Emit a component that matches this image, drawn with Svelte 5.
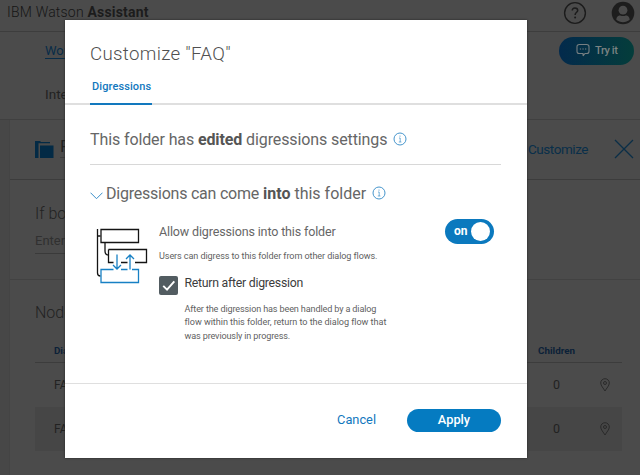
<script>
  let allow = $state(true);
  let returnAfter = $state(true);
  const nodes = [{ name: 'FAQ', children: 0 }, { name: 'FAQ', children: 0 }];
</script>

{#snippet info()}
  <svg class="info" width="14" height="14" viewBox="0 0 14 14" fill="none" stroke="#3c8fc9">
    <circle cx="7" cy="7" r="6" stroke-width=".95" />
    <path d="M6 6h1.200v4M5.800 10h2.600" stroke-width=".7" />
    <circle cx="7" cy="4" r=".6" fill="#3c8fc9" stroke="none" />
  </svg>
{/snippet}

<div class="screen">
  <header class="top">
    <span class="brand">IBM Watson <b>Assistant</b></span>
    <svg width="24" height="24" viewBox="0 0 24 24" fill="none" stroke="#1c1c1c" stroke-width="1.4">
      <circle cx="12" cy="12" r="10.4" />
      <path d="M9.3 9.6V9.2c0-1.2.8-2.1 2.6-2.1s2.8 1 2.8 2.3c0 1.9-2.6 1.8-2.6 4.5" stroke-width="1.5" />
      <circle cx="12.1" cy="16.6" r="1" fill="#1c1c1c" stroke="none" />
    </svg>
    <svg class="user" width="24" height="24" viewBox="0 0 24 24">
      <circle cx="12" cy="12" r="11.3" fill="#1d1d1d" />
      <circle cx="12" cy="9.2" r="4.4" fill="#4b4b4b" />
      <path d="M5.3 18.8c.2-3.6 2.3-4.4 4-4.3 1.8.7 3.6.7 5.4 0 1.7-.1 3.8.7 4 4.3-3.9 3.2-9.5 3.2-13.400 0z" fill="#4b4b4b" />
    </svg>
  </header>
  <section class="crumbs">
    <div class="crumb-row">
      <span class="link">Work</span>
      <span class="try">
        <svg width="14" height="14" viewBox="0 0 14 14" fill="none" stroke="#777f82">
          <path d="M7 12.500V10.500H3.300Q1 10.500 1 8.200V3.800Q1 1.500 3.300 1.500H10.700Q13 1.500 13 3.800V8.200Q13 10.500 10.700 10.500H9L7 13" stroke-width="1.100" />
          <path d="M3.800 6h1.300M6.400 6h1.300M9 6h1.300" stroke-width="1.200" />
        </svg>
        Try it
      </span>
    </div>
    <div class="tabs">Intents</div>
  </section>
  <main class="editor">
    <div class="node-head">
      <svg width="19" height="19" viewBox="0 0 19 19" fill="#032a45">
        <path d="M0 1h5l1 1h9v1.200H3.500V18H0z" /><path d="M5 5.500h13.500V18H5z" />
      </svg>
      <span class="node-name"><span>FAQ</span></span>
      <span class="customize">Customize</span>
      <svg width="20" height="20" viewBox="0 0 20 20" stroke="#0a2e47" stroke-width="1.300"><path d="M1 1l18 18M19 1L1 19" /></svg>
    </div>
    <div class="condition">
      <div class="if">If bot recognizes</div>
      <div class="enter">Enter condition</div>
    </div>
    <div class="nodes">
      <div class="nodes-title">Nodes</div>
      <div class="row th"><span>Dialog node</span><span class="kids">Children</span></div>
      {#each nodes as node}
        <div class="row"><span>{node.name}</span><span class="count">{node.children}</span>
          <svg width="10" height="14" viewBox="0 0 10 14" fill="none" stroke="#272727" stroke-width=".9">
            <path d="M5 13C3.500 10.300.7 7.700.7 5a4.300 4.300 0 0 1 8.600 0c0 2.700-2.800 5.300-4.300 8z" /><circle cx="5" cy="5" r="1.500" />
          </svg>
        </div>
      {/each}
    </div>
  </main>

  <div class="modal" role="dialog">
    <div class="title">Customize "FAQ"</div>
    <nav><span class="tab">Digressions</span></nav>
    <div class="body">
      <div class="summary"><span>This folder has <b>edited</b> digressions settings</span>{@render info()}</div>
      <div class="group">
        <svg class="chev" width="13" height="8" viewBox="0 0 13 8" fill="none" stroke="#3c8fc9"><path d="M.5.700l6 6 6-6" /></svg>
        <span><span class="lead">Digressions can come</span> <b>into</b> this folder</span>{@render info()}
      </div>
      <div class="setting">
        <svg class="diagram" width="52" height="56" viewBox="0 0 52 56" fill="none" stroke="#141414" stroke-width="1.300">
          <path d="M1.500 1V45q0 3 3 3M1.500 8h3M9 15v8q0 4 3.500 4" />
          <path d="M5 1.500H42.500V14.500H5z" />
          <path d="M12.500 21.500H50.500V34.500H39M31.500 34.500H25M17.500 34.500H12.500V21.500" />
          <g stroke="#1780c4">
            <path d="M31.500 41.500H25M17.500 41.500H5V54.500H42.500V41.500H36" />
            <path d="M21 26.500V41M17 37l4 4 4-4M34 41.500V27M30 31l4-4 4 4" />
          </g>
        </svg>
        <div class="options">
          <div class="allow"><span class="label">Allow digressions into this folder</span>
            <button class="toggle" aria-pressed={allow} onclick={() => (allow = !allow)}><span>{allow ? 'on' : 'off'}</span><i></i></button>
          </div>
          <div class="hint">Users can digress to this folder from other dialog flows.</div>
          <div class="check">
            <button class="box" aria-label="Return after digression" onclick={() => (returnAfter = !returnAfter)}>
              {#if returnAfter}<svg width="19" height="19" viewBox="0 0 18 18" fill="none" stroke="#fff" stroke-width="1.800"><path d="M4 9.300l3.600 3.600L14.500 5" /></svg>{/if}
            </button>
            <span>Return after digression</span>
          </div>
          <div class="desc">
            <div>After the digression has been handled by a dialog</div>
            <div class="wide">flow within this folder, return to the dialog flow that</div>
            <div>was previously in progress.</div>
          </div>
        </div>
      </div>
    </div>
    <footer><button class="cancel">Cancel</button><button class="apply">Apply</button></footer>
  </div>
</div>

<style>
  .screen, .screen * { box-sizing: border-box; }
  .screen { position: relative; width: 640px; height: 475px; overflow: hidden; background: #4b4b4b; color: #222; font-family: Roboto, "Liberation Sans", sans-serif; white-space: nowrap; }
  button { border: 0; margin: 0; padding: 0; font-family: inherit; background: none; }
  .top { height: 32px; display: flex; align-items: flex-start; padding: 1px 5px 0 7px; border-bottom: 1px solid #3d3d3d; }
  .brand { flex: 1; font-size: 14px; line-height: 23px; font-weight: 300; color: #161616; letter-spacing: .2px; }
  .brand b { font-weight: 700; color: #1c1c1c; }
  .user { margin-left: 24px; }
  .crumbs { height: 88px; padding: 5px 6px 0 45px; border-bottom: 1px solid #404040; }
  .crumb-row { display: flex; justify-content: space-between; height: 28px; align-items: center; }
  .link { color: #082c48; font-size: 13px; text-decoration: underline; text-underline-offset: 3px; padding-bottom: 2px; }
  .try { width: 75px; height: 28px; border-radius: 14px; background: linear-gradient(90deg, #032a4c, #043d3b); display: flex; align-items: center; gap: 5px; padding: 0 0 2px 17px; color: #7b8383; font-size: 11px; font-weight: 500; letter-spacing: -.4px; }
  .tabs { margin-top: 19px; font-size: 13.500px; line-height: 20px; }
  .editor { height: 355px; margin-left: 9px; border-left: 1px solid #444; box-shadow: -9px 0 #474747; }
  .node-head { height: 60px; display: flex; align-items: center; padding: 0 6px 1px 25px; border-bottom: 1px solid #3c3c3c; }
  .node-name { margin-left: 6px; flex: 1; font-size: 17px; line-height: 21px; padding-bottom: 4px; }
  .node-name span { display: inline-block; width: 150px; border-bottom: 1px solid #3c3c3c; }
  .customize { font-size: 13.500px; color: #092f4a; margin-right: 26px; letter-spacing: -.45px; }
  .condition { height: 100px; padding: 23px 0 0 25px; border-bottom: 1px solid #424242; }
  .if { font-size: 16px; line-height: 21px; font-weight: 300; }
  .enter { margin-top: 7px; width: 400px; height: 23px; line-height: 20px; font-size: 13px; color: #303030; border-bottom: 1px solid #3a3a3a; }
  .nodes { padding: 22px 18px 0 25px; }
  .nodes-title { font-size: 16px; line-height: 22px; font-weight: 300; height: 39px; }
  .row { height: 44px; display: flex; align-items: center; padding: 0 12px 0 19px; font-size: 12px; }
  .row:last-child { background: #464646; }
  .row span:first-child { flex: 1; }
  .th { height: 22px; padding: 0 47px 2px 19px; border-bottom: 1px solid #3c3c3c; color: #0b2138; font-size: 9.800px; font-weight: 700; }
  .count { margin-right: 40px; padding-bottom: 1px; font-size: 12.500px; }

  .modal { position: absolute; left: 65px; top: 20px; width: 462px; height: 438px; background: #fff; box-shadow: 0 0 2px #222; color: #5f5f5f; }
  .title { height: 50px; padding: 22px 0 0 25px; font-size: 18.700px; line-height: 24px; font-weight: 300; color: #505050; letter-spacing: .32px; }
  nav { height: 35px; padding-left: 25px; border-bottom: 2px solid #dfdfdf; }
  .tab { display: block; width: 62px; height: 35px; padding: 9px 0 0 2px; border-bottom: 2px solid #1278be; color: #1278be; font-size: 11px; line-height: 15px; font-weight: 500; letter-spacing: .1px; }
  .body { height: 278px; padding: 0 26px 0 25px; }
  .summary { height: 60px; padding-top: 9px; display: flex; align-items: center; gap: 6px; border-bottom: 1px solid #d8d8d8; font-size: 16px; letter-spacing: -.11px; color: #666; }
  .group { height: 50px; padding-top: 6px; display: flex; align-items: center; font-size: 16px; letter-spacing: 0; color: #666; }
  .lead { letter-spacing: -.23px; }
  b { color: #555; }
  .chev { margin: 5px 3px 0 0; }
  .group .info { margin: 0 0 1px 6px; }
  .info { flex: none; }
  .setting { display: flex; padding: 4px 7px 0 6px; }
  .diagram { flex: none; margin: 9px 11px 0 0; }
  .options { flex: 1; }
  .allow { display: flex; justify-content: space-between; align-items: center; height: 25px; }
  .label { font-size: 12.500px; letter-spacing: -.14px; color: #666; }
  .toggle { width: 49px; height: 25px; border-radius: 13px; background: #0b79be; color: #fff; font-size: 12px; font-weight: 700; display: flex; align-items: center; justify-content: space-between; padding: 0 4px 1px 9px; }
  .toggle i { width: 19px; height: 19px; margin-top: 1px; border-radius: 50%; background: #fff; }
  .hint { height: 26px; margin-top: 4px; font-size: 9.100px; line-height: 16px; letter-spacing: -.1px; }
  .check { display: flex; gap: 6.500px; align-items: flex-start; height: 29px; font-size: 12.300px; line-height: 18px; color: #3c3c3c; letter-spacing: -.26px; }
  .box { width: 19px; height: 19px; margin-top: 2px; border-radius: 2px; background: #525c61; display: flex; }
  .desc { padding-left: 25.500px; font-size: 9.100px; line-height: 13.300px; letter-spacing: -.14px; }
  .wide { letter-spacing: -.05px; }
  footer { height: 75px; border-top: 1px solid #dfdfdf; display: flex; justify-content: flex-end; align-items: center; padding: 0 26px 2px 0; }
  .cancel { color: #1278be; font-size: 12.800px; margin-right: 31px; padding-bottom: 2px; }
  .apply { width: 94px; height: 23px; border-radius: 12px; background: #057bc1; color: #fff; font-size: 12.800px; font-weight: 500; padding-bottom: 2px; }
</style>
